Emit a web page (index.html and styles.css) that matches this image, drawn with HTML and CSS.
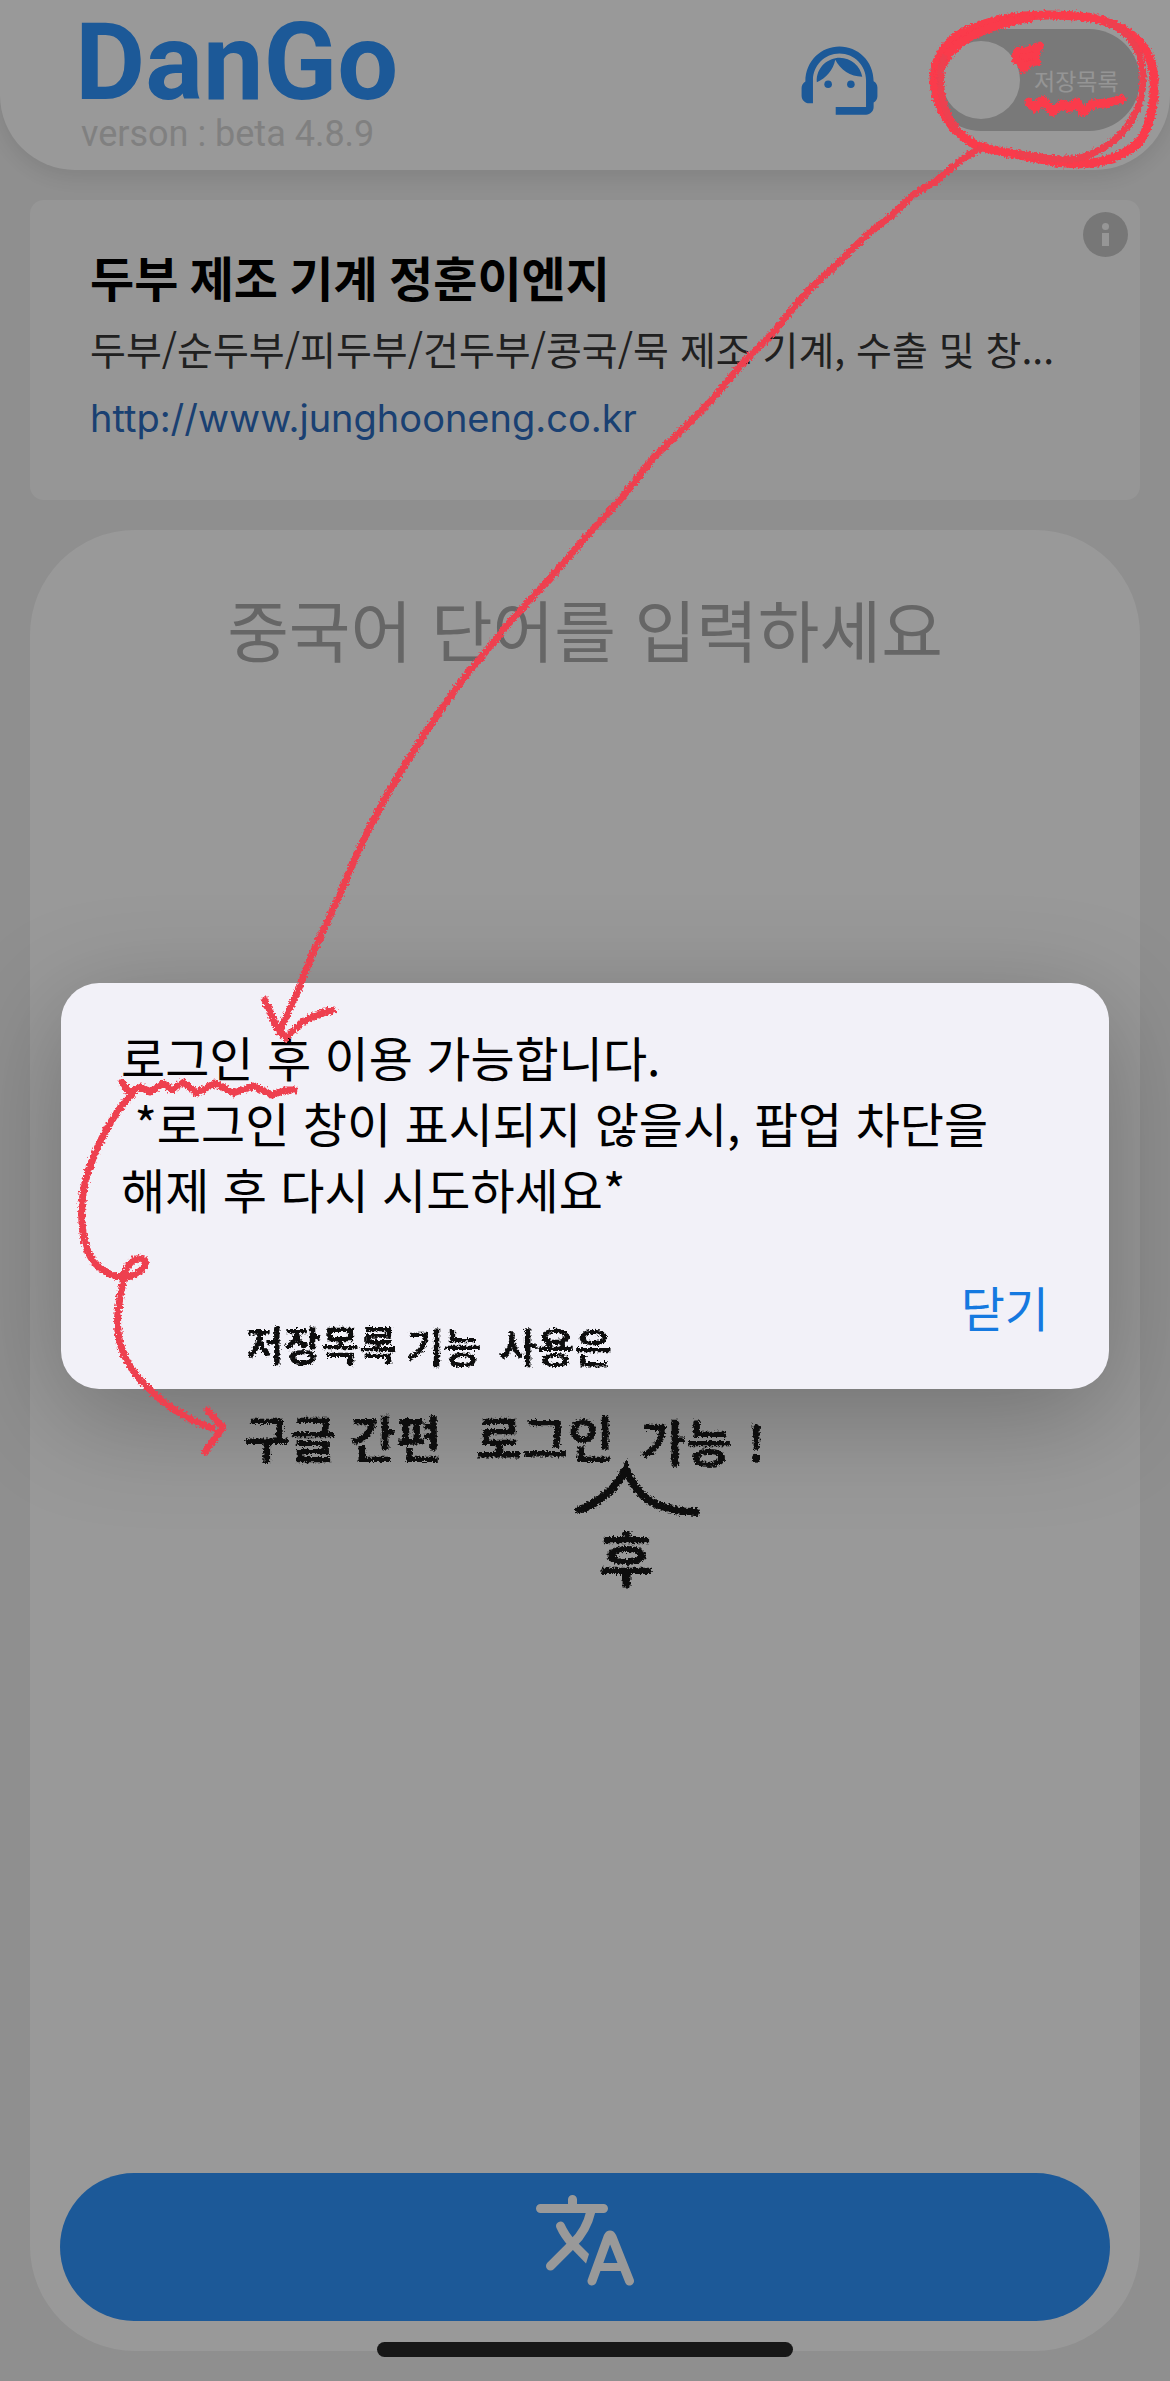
FILE: index.html
```html
<!DOCTYPE html>
<html lang="ko">
<head>
<meta charset="utf-8">
<meta name="viewport" content="width=device-width, initial-scale=1">
<title>DanGo</title>
<link rel="stylesheet" href="styles.css">
</head>
<body>
<div class="app">
  <header class="topbar">
    <div class="brand">
      <h1 class="brand-name">DanGo</h1>
      <p class="brand-version">verson : beta 4.8.9</p>
    </div>
    <button class="support" type="button" aria-label="고객지원">
      <svg class="support-icon" viewBox="0 0 24 24" fill="currentColor" aria-hidden="true">
        <path d="M21 12.22C21 6.73 16.74 3 12 3c-4.69 0-9 3.65-9 9.28-.6.34-1 .98-1 1.72v2c0 1.1.9 2 2 2h1v-6.1c0-3.87 3.13-7 7-7s7 3.13 7 7V19h-8v2h8c1.1 0 2-.9 2-2v-1.22c.59-.31 1-.92 1-1.64v-2.3c0-.7-.41-1.31-1-1.62z"/>
        <circle cx="9" cy="13" r="1"/>
        <circle cx="15" cy="13" r="1"/>
        <path d="M18 11.03C17.52 8.18 15.04 6 12.05 6c-3.03 0-6.29 2.51-6.03 6.45 2.47-1.01 4.33-3.21 4.86-5.89 1.31 2.63 4 4.44 7.12 4.47z"/>
      </svg>
    </button>
    <label class="switch">
      <input class="switch-thumb" type="checkbox" role="switch">
      <span class="switch-text">저장목록</span>
    </label>
  </header>

  <section class="ad">
    <h2 class="ad-title">두부 제조 기계 정훈이엔지</h2>
    <p class="ad-text">두부/순두부/피두부/건두부/콩국/묵 제조 기계, 수출 및 창...</p>
    <a class="ad-link" href="http://www.junghooneng.co.kr">http://www.junghooneng.co.kr</a>
    <button class="ad-info" type="button" aria-label="광고 정보">
      <svg class="ad-info-icon" viewBox="0 0 45 45" aria-hidden="true">
        <circle cx="22.5" cy="22.5" r="22.5" fill="#c7c7c7"/>
        <circle cx="22.5" cy="14.5" r="3.5" fill="#fafafa"/>
        <path d="M19 21h7v13h-7z" fill="#fafafa"/>
      </svg>
    </button>
  </section>

  <main class="panel">
    <textarea class="word" aria-label="중국어 단어" placeholder="중국어 단어를 입력하세요"></textarea>
    <button class="translate" type="button" aria-label="번역">
      <svg class="translate-icon" viewBox="0 0 100 92" fill="none" stroke="#fff" stroke-width="9" stroke-linecap="round" aria-hidden="true">
        <path d="M5.500 14.500H68.500M37.500 5.500V14M56 17C53 30 46 42 37.500 50L15.500 72M25.500 32C29 40 33 45 37.500 50"/>
        <path d="M41 47L54 60L51 69.500L34 52Z" fill="#fff" stroke="none"/>
        <path d="M57 87L73 43Q75 39 77 43L94.500 87" stroke-linejoin="round"/>
        <path d="M63 73H88" stroke-width="8" stroke-linecap="butt"/>
      </svg>
    </button>
  </main>
</div>

<div class="backdrop">
  <div class="dialog" role="alertdialog" aria-modal="true" aria-describedby="message">
    <p class="message" id="message">로그인 후 이용 가능합니다.
 *로그인 창이 표시되지 않을시, 팝업 차단을 해제 후 다시 시도하세요*</p>
    <button class="close" type="button">닫기</button>
  </div>
</div>

<div class="home-indicator"></div>

<svg class="notes" viewBox="0 0 1170 2381">
  <defs>
    <filter id="crayon" filterUnits="userSpaceOnUse" x="0" y="0" width="1170" height="1700">
      <feTurbulence type="fractalNoise" baseFrequency="0.45" numOctaves="2" seed="4"/>
      <feDisplacementMap in="SourceGraphic" scale="6" xChannelSelector="R" yChannelSelector="G"/>
    </filter>
  </defs>
  <g class="red" filter="url(#crayon)">
    <path class="thick" d="M953 127C941 112 934 95 934 78C935 55 948 39 968 30C992 19 1021 15 1050 15C1072 15 1092 16 1107 22C1128 29 1143 42 1150 59C1156 76 1156 103 1147 127"/>
    <path class="thick" d="M1147 127C1142 145 1125 155 1103 161C1075 168 1045 160 1015 154C998 151 985 149 974 144C966 139 959 134 953 127"/>
    <path class="thick" d="M939 75C944 53 960 39 985 30C1000 24 1013 20 1030 18"/>
    <path d="M1107 22C1134 33 1143 56 1143 78C1143 104 1132 126 1112 142C1098 152 1080 160 1064 159C1050 159 1035 156 1020 154"/>
    <path d="M944 58C937 78 940 110 958 131"/>
    <path class="fill" d="M1015 60L1017 51L1027 50L1040 45L1036 56L1037 62L1030 63L1023 70L1021 63Z"/>
    <path class="thick" d="M1029 103L1035 108L1043 100L1053 112L1062 104L1070 108L1077 102L1083 112L1093 104L1107 103L1122 99"/>
    <path d="M980 149Q965 156 954 166L936 181L914 194L890 217L869 233L838 263L812 287L800 300L773 333L740 366L712 400L676 436L654 457L620 500L585 538L551 577L509 623L465 677Q440 709 410 757Q368 822 342 890Q325 926 312 955L297 993L279 1032"/>
    <path d="M265 1000L277 1028L286 1038L301 1023Q316 1014 333 1010"/>
    <path d="M122 1082L129 1093L140 1087L151 1092L163 1083L172 1090L183 1082L197 1093L215 1083L233 1093L254 1086L272 1095L286 1090L295 1090"/>
    <path d="M133 1093C113 1113 97 1145 90 1167C82 1187 80 1212 83 1233C86 1255 96 1270 115 1276C130 1281 148 1269 145 1261C141 1254 126 1260 124 1278C119 1300 114 1325 121 1346C128 1370 145 1386 160 1399C176 1412 193 1422 212 1428"/>
    <path d="M207 1410L223 1427L205 1452"/>
  </g>
  <g class="ink" filter="url(#crayon)">
    <g class="write">
      <text x="246" y="1361">저장목록</text>
      <text x="406" y="1363">기능</text>
      <text x="499" y="1363">사용은</text>
    </g>
    <g class="write-large">
      <text x="244" y="1458">구글</text>
      <text x="350" y="1458">간편</text>
      <text x="476" y="1458">로그인</text>
      <text x="640" y="1462">가능</text>
      <text x="747" y="1462">!</text>
    </g>
    <text class="write-insert" x="599" y="1582">후</text>
    <path d="M579 1510C598 1504 617 1488 626 1469C632 1484 641 1498 656 1504C671 1511 684 1512 696 1512"/>
  </g>
</svg>
</body>
</html>
```
FILE: styles.css
```css
* {
  box-sizing: border-box;
}

body {
  margin: 0;
  background: #efefef;
  color: #000;
  font-family: Inter, "Noto Sans CJK KR", sans-serif;
}

h1, h2, p {
  margin: 0;
}

button {
  border: 0;
  padding: 0;
  background: none;
  font: inherit;
  cursor: pointer;
}

svg {
  display: block;
}

.app {
  display: flex;
  flex-direction: column;
  gap: 30px;
  min-height: 100vh;
  padding-bottom: 30px;
}

/* Header */
.topbar {
  display: flex;
  align-items: center;
  height: 170px;
  padding: 0 30px 10px 75px;
  border-radius: 0 0 75px 75px;
  background: #fff;
  box-shadow: 0 6px 24px rgba(0, 0, 0, 0.1);
}

.brand {
  flex: 1;
  font-family: Roboto, sans-serif;
}

.brand-name {
  color: #2f94fd;
  font-size: 108px;
  font-weight: 700;
  line-height: 108px;
}

.brand-version {
  padding-left: 6px;
  color: #d6d6d6;
  font-size: 36px;
  line-height: 36px;
}

.support {
  margin-right: 45px;
  color: #2f94fd;
}

.support-icon {
  width: 91px;
  height: 91px;
}

.switch {
  display: flex;
  align-items: center;
  gap: 14px;
  width: 210px;
  height: 102px;
  padding: 0 12px;
  border-radius: 51px;
  background: #cacaca;
}

.switch-thumb {
  appearance: none;
  width: 78px;
  height: 78px;
  margin: 0;
  border-radius: 50%;
  background: #fff;
}

.switch-text {
  color: #f8f8f8;
  font-family: "Noto Sans CJK KR", sans-serif;
  font-size: 23px;
  font-weight: 400;
  line-height: 32px;
  white-space: nowrap;
}

/* Advertisement card */
.ad {
  position: relative;
  height: 300px;
  margin: 0 30px;
  padding: 45px 60px;
  border-radius: 14px;
  background: #fafafa;
}

.ad-title {
  font-size: 48px;
  font-weight: 700;
  line-height: 70px;
}

.ad-text {
  overflow: hidden;
  color: #363636;
  font-family: "Noto Sans CJK KR", sans-serif;
  font-size: 39px;
  line-height: 66px;
  text-overflow: ellipsis;
  white-space: nowrap;
}

.ad-link {
  color: #2c6cbe;
  font-size: 38px;
  line-height: 74px;
  text-decoration: none;
}

.ad-info {
  position: absolute;
  top: 12px;
  right: 12px;
}

.ad-info-icon {
  width: 45px;
  height: 45px;
}

/* Word input panel */
.panel {
  display: flex;
  flex: 1;
  flex-direction: column;
  margin: 0 30px;
  padding: 48px 30px 30px;
  border-radius: 105px;
  background: #fff;
}

.word {
  flex: 1;
  width: 100%;
  padding: 0;
  border: 0;
  outline: 0;
  background: none;
  font-family: "Noto Sans CJK KR", sans-serif;
  font-size: 67px;
  line-height: 100px;
  text-align: center;
  resize: none;
}

.word::placeholder {
  color: #aaa;
}

.translate {
  display: flex;
  align-items: center;
  justify-content: center;
  height: 148px;
  padding-bottom: 14px;
  border-radius: 74px;
  background: #2f94fd;
}

.translate-icon {
  width: 100px;
  height: 92px;
}

/* Alert dialog */
.backdrop {
  position: absolute;
  inset: 0;
  display: flex;
  align-items: center;
  padding: 0 61px 10px;
  background: rgba(0, 0, 0, 0.4);
}

.dialog {
  display: flex;
  flex: 1;
  flex-direction: column;
  gap: 52px;
  padding: 40px 60px 50px;
  border-radius: 38px;
  background: #f2f1f8;
  box-shadow: 0 26px 110px rgba(0, 0, 0, 0.26);
  font-family: "Noto Sans CJK KR", sans-serif;
  font-size: 48px;
  line-height: 66px;
}

.message {
  white-space: pre-wrap;
  word-break: keep-all;
}

.close {
  align-self: flex-end;
  color: #1579e0;
}

.home-indicator {
  position: absolute;
  bottom: 24px;
  left: 50%;
  width: 416px;
  height: 15px;
  margin-left: -208px;
  border-radius: 8px;
  background: #171717;
}

/* Hand-drawn notes over the screen */
.notes {
  position: absolute;
  top: 0;
  left: 0;
  width: 100%;
  height: auto;
  pointer-events: none;
}

.red path {
  fill: none;
  stroke: #ee3f50;
  stroke-width: 7;
  stroke-linecap: round;
  stroke-linejoin: round;
}

.red .thick {
  stroke: #fa3a4b;
  stroke-width: 9;
}

.red .fill {
  fill: #fa3a4b;
  stroke: #fa3a4b;
}

.ink {
  fill: #0b0b0b;
  font-family: "Noto Sans CJK KR", sans-serif;
  font-weight: 700;
}

.ink path {
  fill: none;
  stroke: #0b0b0b;
  stroke-width: 8;
  stroke-linecap: round;
}

.write {
  font-size: 41px;
}

.write-large {
  font-size: 50px;
}

.write-insert {
  font-size: 60px;
}
```
